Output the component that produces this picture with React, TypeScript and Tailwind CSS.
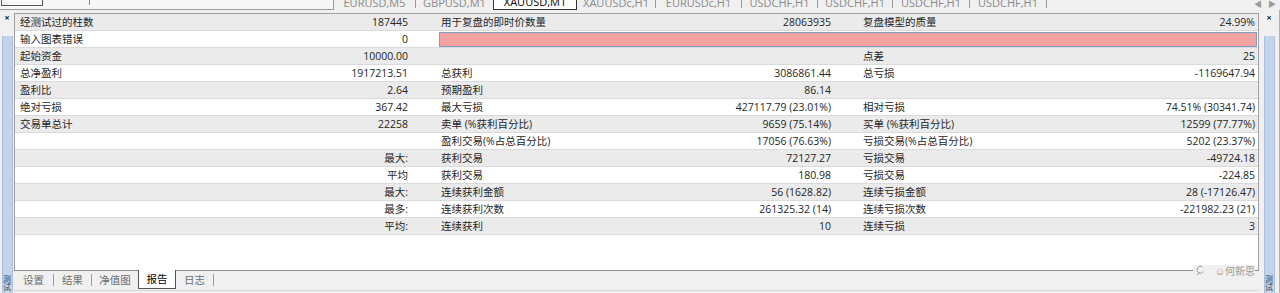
const FONT = "font-['Open_Sans','Noto_Sans_CJK_SC',sans-serif]";

type Row = (string | null)[];

const rows: Row[] = [
  ["经测试过的柱数", "187445", "用于复盘的即时价数量", "28063935", "复盘模型的质量", "24.99%"],
  ["输入图表错误", "0", null, null, null, null],
  ["起始资金", "10000.00", "", "", "点差", "25"],
  ["总净盈利", "1917213.51", "总获利", "3086861.44", "总亏损", "-1169647.94"],
  ["盈利比", "2.64", "预期盈利", "86.14", "", ""],
  ["绝对亏损", "367.42", "最大亏损", "427117.79 (23.01%)", "相对亏损", "74.51% (30341.74)"],
  ["交易单总计", "22258", "卖单 (%获利百分比)", "9659 (75.14%)", "买单 (%获利百分比)", "12599 (77.77%)"],
  ["", "", "盈利交易(%占总百分比)", "17056 (76.63%)", "亏损交易(%占总百分比)", "5202 (23.37%)"],
  ["", "最大:", "获利交易", "72127.27", "亏损交易", "-49724.18"],
  ["", "平均", "获利交易", "180.98", "亏损交易", "-224.85"],
  ["", "最大:", "连续获利金额", "56 (1628.82)", "连续亏损金额", "28 (-17126.47)"],
  ["", "最多:", "连续获利次数", "261325.32 (14)", "连续亏损次数", "-221982.23 (21)"],
  ["", "平均:", "连续获利", "10", "连续亏损", "3"],
];

const chartTabs = [
  { name: "EURUSD,M5", w: "w-[81px]" },
  { name: "GBPUSD,M1", w: "w-[77px]" },
  { name: "XAUUSD,M1", w: "w-[84px]", active: true },
  { name: "XAUUSDc,H1", w: "w-[78px]" },
  { name: "EURUSDc,H1", w: "w-[85px]" },
  { name: "USDCHF,H1", w: "w-[75px]" },
  { name: "USDCHF,H1", w: "w-[74px]" },
  { name: "USDCHF,H1", w: "w-[76px]" },
  { name: "USDCHF,H1", w: "w-[76px]" },
];

const bottomTabs = [
  { name: "设置", w: "w-[39px]" },
  { name: "结果", w: "w-[37px]" },
  { name: "净值图", w: "w-[46px]" },
  { name: "报告", w: "w-[38px]", active: true },
  { name: "日志", w: "w-[37px]" },
];

function SideStrip({ label }: { label: string }) {
  return (
    <div className="flex flex-col items-center h-full">
      <div className="h-[14px] w-full flex items-center justify-center text-[9px] font-bold text-[#222] leading-none">×</div>
      <div className="mt-[12px] flex-1 w-[11px] bg-[#c3d4ea] border-x border-[#a9bfdc] flex flex-col justify-end items-center pb-[2px]">
        <span className="text-[8px] leading-[9px] text-[#2b3f66] [writing-mode:vertical-rl]">{label}</span>
      </div>
    </div>
  );
}

export default function App() {
  return (
    <div className={`w-[1280px] h-[293px] bg-[#f0f0f0] flex flex-col overflow-hidden text-[#262626] ${FONT}`}>
      {/* top strip with chart tabs, mostly clipped */}
      <div className="h-[10px] flex overflow-hidden relative">
        <div className="w-[334px] h-[10px] bg-[#f7f7f7] border-r border-b border-[#9a9a9a] flex items-start">
          <div className="ml-[1px] w-[42px] h-[6px] border-x border-b border-[#555]" />
          <div className="ml-[46px] w-px h-[5px] bg-[#888]" />
        </div>
        <div className="flex items-start">
          {chartTabs.map((t, i) => (
            <div
              key={i}
              className={`${t.w} h-[10px] flex items-end justify-center text-[11px] leading-none ${
                t.active ? "border-x border-b border-[#333] bg-white text-black" : "text-[#8a8a8a]"
              }`}
            >
              <span className="mb-[2px]">{t.name}</span>
            </div>
          )).flatMap((el, i) =>
            i === 0 || chartTabs[i].active || chartTabs[i - 1].active
              ? [el]
              : [<div key={"s" + i} className="w-px h-[8px] bg-[#9a9a9a]" />, el]
          )}
          <div className="w-px h-[8px] bg-[#9a9a9a]" />
        </div>
        <div className="absolute right-[4px] top-0 flex gap-[6px] text-[8px] leading-[7px] text-[#9a9a9a]">
          <span>◀</span>
          <span>▶</span>
        </div>
      </div>

      <div className="flex-1 flex">
        <div className="w-[14px]">
          <SideStrip label="测试" />
        </div>

        <div className="flex-1 flex flex-col">
          <div className="h-[3px]" />
          <div className="h-[257px] bg-white border-t border-x border-[#a0a0a0] flex flex-col">
            {rows.map((r, i) => (
              <div
                key={i}
                className={`h-[17px] grid grid-cols-[205px_217px_203px_218px_202px_198px] items-center border-b border-[#dadada] text-[10.5px] leading-none ${
                  i % 2 === 0 ? "bg-[#ebebeb]" : "bg-white"
                }`}
              >
                <div className="pl-[5px] whitespace-nowrap">{r[0]}</div>
                <div className="pr-[29px] text-right whitespace-nowrap">{r[1]}</div>
                {r[2] === null ? (
                  <div className="col-span-4 h-full pl-[2px] pr-[1px] flex items-center">
                    <div className="w-full h-[15px] bg-[#f5a2a2] border border-[#7e9cc4]" />
                  </div>
                ) : (
                  <>
                    <div className="pl-[4px] whitespace-nowrap">{r[2]}</div>
                    <div className="pr-[27px] text-right whitespace-nowrap">{r[3]}</div>
                    <div className="pl-[5px] whitespace-nowrap">{r[4]}</div>
                    <div className="pr-[3px] text-right whitespace-nowrap">{r[5]}</div>
                  </>
                )}
              </div>
            ))}
            <div className="flex-1" />
          </div>

          <div className="h-[23px] border-t border-[#8c8c8c] flex items-start relative">
            {bottomTabs.map((t, i) => (
              <div key={i} className="flex items-start">
                <div
                  className={`${t.w} h-[18px] flex items-center justify-center text-[10.5px] leading-none ${
                    t.active
                      ? "bg-white border-x border-b border-[#555] text-black -mt-px h-[19px]"
                      : "text-[#6e6e6e]"
                  }`}
                >
                  {t.name}
                </div>
                {!t.active && !(bottomTabs[i + 1] && bottomTabs[i + 1].active) && (
                  <div className="w-px h-[12px] mt-[3px] bg-[#a0a0a0]" />
                )}
              </div>
            ))}
            <div className="absolute left-0 right-0 bottom-[2px] h-px bg-[#d8d8d8]" />
            <div className="absolute right-[4px] -top-[6px] flex items-center text-[10px] leading-none text-[#9c9c9c] bg-[#f0f0f0] pl-[3px]">
              <svg width="9" height="11" viewBox="0 0 9 11" fill="none" stroke="#9c9c9c" strokeWidth="1">
                <path d="M6.5 2 A3.5 3.5 0 1 0 7.5 6.5" />
                <path d="M1.5 10 L3 7.5" />
              </svg>
              <span className="ml-[10px]">☺何新思</span>
            </div>
          </div>
        </div>

        <div className="w-[21px] flex">
          <div className="w-[20px]">
            <SideStrip label="测试" />
          </div>
          <div className="w-px bg-[#b0b0b0]" />
        </div>
      </div>
    </div>
  );
}
